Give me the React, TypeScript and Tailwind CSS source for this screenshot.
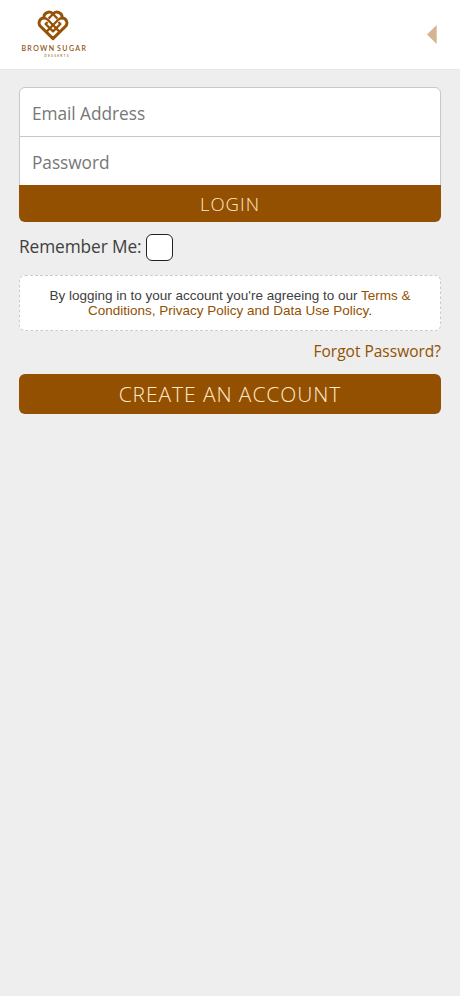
import React from "react";

const Logo = () => {
    return (
        <div className="flex w-[70px] flex-col items-center text-[#8f5514]">
            <svg className="-ml-px" width="32" height="33" viewBox="0 0 32 33" fill="none" stroke="#965207" strokeWidth="2.9" strokeLinejoin="round">
                <path d="M16 29.6 L3.8 17.6 A4.9 4.9 0 0 1 7 9 A5.1 5.1 0 0 1 16 5 A5.1 5.1 0 0 1 25 9 A4.9 4.9 0 0 1 28.2 17.6 Z" />
                <path strokeWidth="2.3" d="M7 9 Q9.2 9.2 10.8 10.8 L22.4 22.6" />
                <path strokeWidth="2.3" d="M25 9 Q22.8 9.2 21.2 10.8 L9.6 22.6" />
                <path strokeWidth="2.3" d="M16 5 L11.6 9.6 M16 5 L20.4 9.6" />
                <path strokeWidth="2.3" d="M10.6 13 L8.6 15 L16 22.4 L23.4 15 L21.4 13" />
            </svg>
            <span className="mt-[1px] pl-[1.8px] font-['Lato'] text-[7px] font-semibold leading-[10px] tracking-[1.4px] [word-spacing:-1.6px] whitespace-nowrap">BROWN SUGAR</span>
            <span className="mt-px pl-[7px] font-['Lato'] text-[3.4px] leading-[4px] tracking-[1.2px] whitespace-nowrap">DESSERTS</span>
        </div>
    );
};

const Header = () => {
    return (
        <header className="flex h-[69px] items-start justify-between bg-white pl-[18.5px] pr-[23px] pt-[9px]">
            <Logo />
            <button type="button" aria-label="Back" className="mt-4">
                <svg width="10" height="19" viewBox="0 0 10 19">
                    <path d="M0 9.5 L9.7 0 V19 Z" fill="#d5b491" />
                </svg>
            </button>
        </header>
    );
};

const App = () => {
    return (
        <div className="min-h-screen bg-[#eeeeee] font-['Open_Sans',sans-serif] text-[#404040]">
            <Header />
            <main className="flex flex-col border-t border-[#e8e8e8] px-[19px] pt-[17px]">
                <form className="flex flex-col" onSubmit={(e) => e.preventDefault()}>
                    <input
                        type="email"
                        placeholder="Email Address"
                        className="h-[50px] rounded-t-[6px] border border-[#c8c8c8] bg-white px-3 pt-0.5 text-[17.3px] tracking-[-0.05px] placeholder:text-[#777777]"
                    />
                    <input
                        type="password"
                        placeholder="Password"
                        className="h-12 border-x border-[#c8c8c8] bg-white px-3 pt-0.5 text-[17.3px] tracking-[-0.05px] placeholder:text-[#777777]"
                    />
                    <button type="submit" className="h-[37px] rounded-b-[6px] bg-[#935000] pt-px text-[18.5px] font-light tracking-[1px] text-[#ffe9cc]">
                        LOGIN
                    </button>
                    <label className="mt-3 flex h-7 items-center gap-[4.5px] text-[17.3px]">
                        <span className="-mt-0.5 tracking-[-0.1px]">Remember Me:</span>
                        <input type="checkbox" className="-mt-px size-[27px] appearance-none rounded-[6px] border-[1.5px] border-[#222222] bg-white" />
                    </label>
                </form>
                <p className="mt-[13px] h-[56px] rounded-[6px] border-[1.5px] border-dashed border-[#cccccc] bg-white px-5 pt-3 text-center font-['Liberation_Sans',sans-serif] text-[13.5px] leading-[15px]">
                    By logging in to your account you're agreeing to our{" "}
                    <a href="#" className="text-[#935000]">
                        Terms &amp;
                        <br />
                        Conditions, Privacy Policy and Data Use Policy
                    </a>
                    .
                </p>
                <a href="#" className="mt-2 self-end text-[15.5px] leading-6 text-[#935000]">
                    Forgot Password?
                </a>
                <button type="button" className="mt-[11px] h-10 rounded-[6px] bg-[#935000] pt-0.5 text-[21px] font-light tracking-[0.92px] text-[#ffe9cc]">
                    CREATE AN ACCOUNT
                </button>
            </main>
        </div>
    );
};

export default App;
